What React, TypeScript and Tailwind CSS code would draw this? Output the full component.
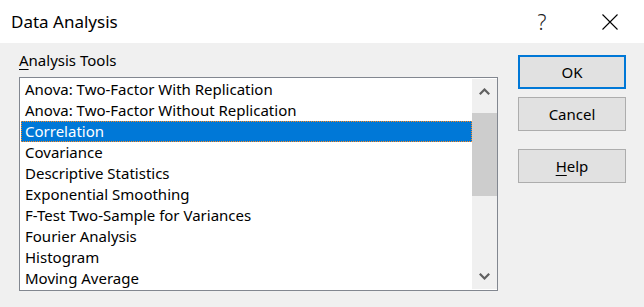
import React from "react";

const tools = [
  "Anova: Two-Factor With Replication",
  "Anova: Two-Factor Without Replication",
  "Correlation",
  "Covariance",
  "Descriptive Statistics",
  "Exponential Smoothing",
  "F-Test Two-Sample for Variances",
  "Fourier Analysis",
  "Histogram",
  "Moving Average",
];

function Chevron({ up }: { up?: boolean }) {
  return (
    <svg width="11" height="7" viewBox="0 0 11 7" className="text-[#606060]">
      <polyline
        points={up ? "0.8,6.2 5.5,1.5 10.2,6.2" : "0.8,0.8 5.5,5.5 10.2,0.8"}
        fill="none"
        stroke="currentColor"
        strokeWidth="2.2"
      />
    </svg>
  );
}

function DialogButton({ children, primary }: { children: React.ReactNode; primary?: boolean }) {
  return (
    <button
      className={
        primary
          ? "w-[108px] h-[34px] bg-[#e1e1e1] border-2 border-[#0078d7] text-[15px] text-black"
          : "w-[108px] h-[34px] bg-[#e1e1e1] border border-[#adadad] text-[15px] text-black"
      }
    >
      {children}
    </button>
  );
}

export default function App() {
  return (
    <div className="w-[644px] h-[307px] bg-[#f0f0f0] flex flex-col font-['Noto_Sans',sans-serif] text-black">
      <div className="h-[43px] bg-white flex items-center justify-between pl-[11px]">
        <span className="text-[17px] leading-[23px]">Data Analysis</span>
        <div className="flex items-center h-full">
          <span className="text-[21px] leading-[24px] text-[#222] w-[20px] mr-[50px] text-center font-light">?</span>
          <svg width="16" height="16" viewBox="0 0 16 16" className="mr-[26px]">
            <path d="M0.5 0.5 L15.5 15.5 M15.5 0.5 L0.5 15.5" stroke="#000" strokeWidth="1.1" />
          </svg>
        </div>
      </div>
      <div className="flex">
        <div className="pl-[19px] pt-[7px]">
          <div className="text-[15px] leading-[20px]">
            <span className="underline underline-offset-[3px]">A</span>nalysis Tools
          </div>
          <div className="mt-[7px] w-[479px] h-[214px] border border-[#828790] bg-white flex pl-px py-px">
            <div className="flex-1 flex flex-col">
              {tools.map((t, i) => (
                <div
                  key={t}
                  className={
                    i === 2
                      ? "h-[21px] leading-[19px] pl-[3px] text-[15px] bg-[#0078d7] text-white border border-dotted border-[#ff8a1f]"
                      : "h-[21px] leading-[21px] pl-[4px] text-[15px] whitespace-nowrap"
                  }
                >
                  {t}
                </div>
              ))}
            </div>
            <div className="w-[25px] bg-[#f0f0f0] flex flex-col">
              <div className="h-[25px] flex items-center justify-center">
                <Chevron up />
              </div>
              <div className="flex-1 flex flex-col">
                <div className="mt-[9px] h-[83px] bg-[#cdcdcd]" />
              </div>
              <div className="h-[25px] flex items-center justify-center">
                <Chevron />
              </div>
            </div>
          </div>
        </div>
        <div className="ml-[20px] pt-[12px] flex flex-col">
          <DialogButton primary>OK</DialogButton>
          <div className="mt-[8px]">
            <DialogButton>Cancel</DialogButton>
          </div>
          <div className="mt-[18px]">
            <DialogButton>
              <span className="underline underline-offset-[3px]">H</span>elp
            </DialogButton>
          </div>
        </div>
      </div>
    </div>
  );
}
